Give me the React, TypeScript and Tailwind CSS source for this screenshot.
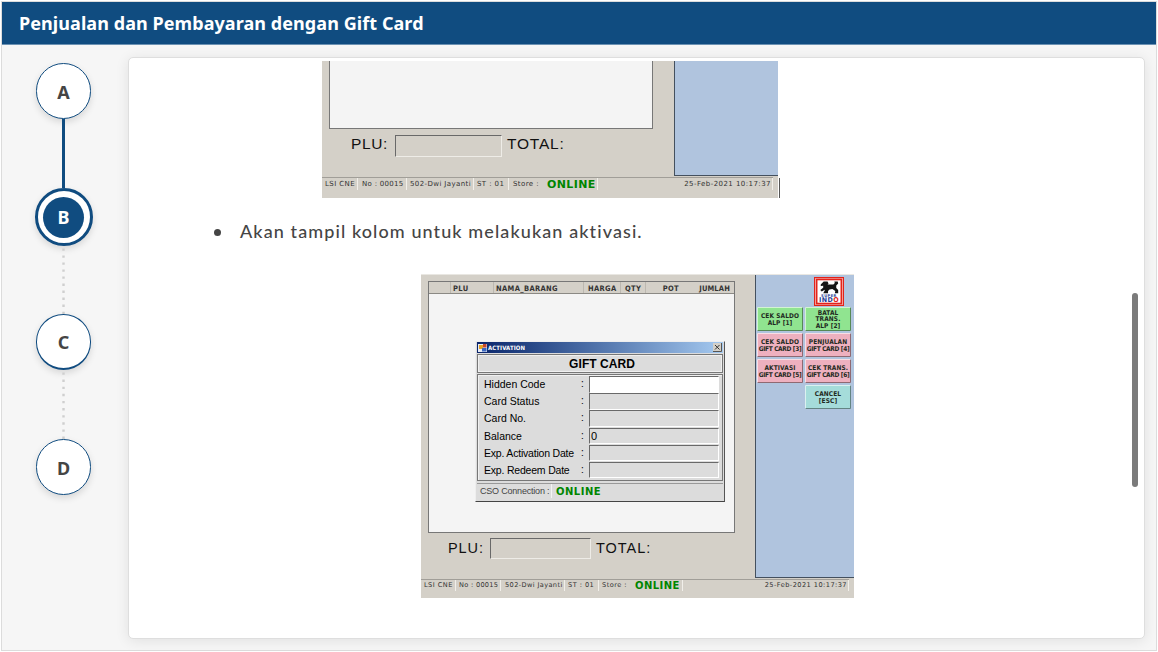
import type { ReactNode } from 'react';

const cell = 'h-full border-r border-[#f1efea] whitespace-nowrap overflow-hidden flex items-center';

function StepConnector({ active, className = '' }: { active?: boolean; className?: string }) {
  if (active) return <div className="h-[69px] w-[3px] shrink-0 bg-[#104c80]" />;
  return (
    <svg className={'w-[3px] shrink-0 ' + className} viewBox="0 0 3 70" preserveAspectRatio="none">
      <line x1="1.5" y1="2.5" x2="1.5" y2="70" stroke="#cfcfcf" strokeWidth="2.4" strokeDasharray="2.4 4.83" />
    </svg>
  );
}

function Step({ label, className = '' }: { label: string; className?: string }) {
  return (
    <div
      className={
        'flex h-14 w-[55px] shrink-0 items-center justify-center rounded-full border border-[#104c80] bg-white pt-px text-lg leading-none font-bold text-[#454545] shadow-[0_3px_7px_rgba(0,0,0,0.13)] ' +
        className
      }
    >
      {label}
    </div>
  );
}

function LionLogo() {
  return (
    <svg className="h-[29px] w-[30px]" viewBox="0 0 31 29" preserveAspectRatio="none">
      <rect width="31" height="29" fill="#e2231a" />
      <rect x="1.3" y="1.2" width="28.4" height="26.6" fill="#fff" />
      <rect x="2.7" y="2.4" width="25.6" height="24.2" fill="none" stroke="#e2231a" strokeWidth="1.8" />
      <path
        d="M7 7.5 L10 4.5 L14 4.5 L15 6.5 L14 7.5 L20 7.5 L21.5 6 L21 4.5 L24.5 4.5 L25 6.5 L23 8.5 L23 11 L25 13 L25 16.3 L21.5 16.3 L22 14 L19 12 L16 12.6 L14.5 14 L14.5 16.3 L9.5 16.3 L11 13.8 L11 12.8 L8 14.5 L6.5 13 L9.5 10.8 L9.5 8.8 L7 9 Z"
        fill="#151515"
      />
      <text x="15.5" y="19.8" textAnchor="middle" fontFamily="DejaVu Sans" fontWeight="bold" fontSize="3.8" fill="#273d95">SUPER</text>
      <text x="15.5" y="25.4" textAnchor="middle" fontFamily="DejaVu Sans" fontWeight="bold" fontSize="6.6" fill="#273d95">
        IND<tspan fill="#e2231a">O</tspan>
      </text>
    </svg>
  );
}

function KeyButton({ lines, tone }: { lines: string[]; tone: string }) {
  return (
    <div
      className={
        "flex h-6 w-[46px] flex-col items-center justify-center rounded-[1px] border border-t-white/60 border-l-white/60 border-r-black/40 border-b-black/40 pt-px font-['DejaVu_Sans_Condensed','DejaVu_Sans',sans-serif] text-[6.5px] leading-[6.6px] font-bold whitespace-nowrap text-[#1f2a22] " +
        tone
      }
    >
      {lines.map((line) => (
        <span key={line} className={line.startsWith('GIFT') ? 'tracking-[-0.3px]' : 'tracking-[0.1px]'}>{line}</span>
      ))}
    </div>
  );
}

function Field({ label, children, white }: { label: string; children?: ReactNode; white?: boolean }) {
  return (
    <div className="flex h-[17.2px] items-start">
      <span
        className={
          'w-[102px] pl-[5px] text-[10.5px] leading-4 whitespace-nowrap ' +
          (label.startsWith('Exp.') ? 'tracking-[-0.2px]' : 'tracking-normal')
        }
      >
        {label}
      </span>
      <span className="w-[8px] text-[10px] leading-4">:</span>
      <div
        className={
          'h-[16.5px] w-[130px] border-t border-l border-[#696969] border-r border-b border-r-white border-b-white pl-[1px] text-[11px] leading-[15px] ' +
          (white ? 'bg-white' : 'bg-[#dcdcdc]')
        }
      >
        {children}
      </div>
    </div>
  );
}

function ActivationDialog() {
  return (
    <div className="absolute top-[59px] left-[46px] flex h-[161px] w-[250px] flex-col border border-t-[#eeeeee] border-l-[#eeeeee] border-r-[#555] border-b-[#444] bg-[#dcdcdc] px-px font-['Liberation_Sans',sans-serif] text-black">
      <div className="flex h-[11px] items-center bg-linear-to-r from-[#0a246a] to-[#a6caf0] pr-px">
        <svg className="ml-px h-2.5 w-2.5" viewBox="0 0 10 10">
          <rect x="0" y="1" width="9" height="8" fill="#e8edf5" />
          <rect x="1" y="2" width="4" height="4" fill="#e7a427" />
          <rect x="5" y="1" width="3.5" height="3.5" fill="#c4452d" />
          <rect x="4" y="5" width="4.5" height="3.5" fill="#3c67bd" />
        </svg>
        <span className="font-['DejaVu_Sans_Condensed','DejaVu_Sans',sans-serif] text-[6px] leading-none font-bold tracking-[0.1px] text-white">ACTIVATION</span>
        <svg className="ml-auto h-[9px] w-[9px]" viewBox="0 0 9 9">
          <rect width="9" height="9" fill="#d4d0c8" />
          <path d="M0 8.5H8.5V0" stroke="#555" fill="none" />
          <path d="M2 2L6.5 6.5M6.5 2L2 6.5" stroke="#333" strokeWidth="1" />
        </svg>
      </div>
      <div className="mt-px flex h-[19px] items-center justify-center border border-[#777] text-[12px] leading-none font-bold tracking-[0.05px] outline-1 -outline-offset-2 outline-[#f0f0f0]">
        <span className="pl-[4px]">GIFT CARD</span>
      </div>
      <div className="mt-px h-[107px] border border-[#777] pt-px pl-px shadow-[inset_1px_1px_0_#f0f0f0]">
        <Field label="Hidden Code" white />
        <Field label="Card Status" />
        <Field label="Card No." />
        <Field label="Balance">0</Field>
        <Field label="Exp. Activation Date" />
        <Field label="Exp. Redeem Date" />
      </div>
      <div className="mt-[2px] flex h-[15px] border-t border-[#999]">
        <span className="w-[75px] border-r border-[#f4f4f4] pl-[3px] text-[9px] leading-[15px] tracking-[-0.2px] whitespace-nowrap text-[#444]">CSO Connection :</span>
        <span className="pl-[4px] font-['DejaVu_Sans',sans-serif] text-[10px] leading-[15px] font-bold tracking-[0.5px] text-[#008500]">ONLINE</span>
      </div>
    </div>
  );
}

function FirstScreen() {
  return (
    <div className="ml-[193px] flex w-[458px] items-end">
      <div className="h-[137px] w-[456px] bg-[#d4d0c8] font-['DejaVu_Sans',sans-serif] text-[7px] tracking-[0.4px] text-[#333]">
        <div className="flex h-[115px]">
          <div className="flex w-[352px] flex-col">
            <div className="ml-[7px] h-[68px] w-[324px] border-x border-b border-[#777] bg-[#f4f4f4]" />
            <div className="mt-[6px] flex h-[22px] items-center font-['Liberation_Sans',sans-serif] text-[15.5px] leading-none text-[#111]">
              <span className="w-[73px] pb-[4px] pl-[29px] tracking-[0.6px]">PLU:</span>
              <span className="h-[22px] w-[107px] border border-t-[#696969] border-l-[#696969] border-r-[#eeece7] border-b-[#eeece7]" />
              <span className="pb-[4px] pl-[5px] tracking-[0.8px]">TOTAL:</span>
            </div>
          </div>
          <div className="flex-1 border-b border-l border-[#44505e] bg-[#b0c4de]" />
        </div>
        <div className="mt-px flex h-[13px] w-[451px] border-t border-[#a19e98]">
          <span className={cell + ' w-[36px] pl-[3px]'}>LSI CNE</span>
          <span className={cell + ' w-[49px] pl-[4px] tracking-[0.3px]'}>No : 00015</span>
          <span className={cell + ' w-[67px] pl-[3px]'}>502-Dwi Jayanti</span>
          <span className={cell + ' w-[35px] pl-[3px]'}>ST : 01</span>
          <span className={cell + ' w-[34px] border-r-0 pl-[4px]'}>Store :</span>
          <span className={cell + ' w-[55px] pt-[2px] pl-[4px] text-[11px] font-bold text-[#008500]'}>ONLINE</span>
          <span className={cell + ' flex-1 justify-end pr-px tracking-[0.45px]'}>25-Feb-2021 10:17:37</span>
        </div>
      </div>
      <div className="ml-px h-5 w-px bg-[#555]" />
    </div>
  );
}

function SecondScreen() {
  return (
    <div className="ml-[292px] h-[324px] w-[433px] bg-[#d4d0c8] font-['DejaVu_Sans',sans-serif] text-[6.6px] tracking-[0.45px] text-[#333]">
      <div className="flex h-[304px] border-t border-[#e9e7e2]">
        <div className="flex w-[334px] flex-col">
          <div className="relative mt-[6px] ml-[7px] h-[252px] w-[307px] border border-[#777] bg-[#f4f4f4] tracking-normal">
            <div className="flex h-[12px] items-center border-b border-[#8b8984] bg-[#d4d0c8] font-['DejaVu_Sans_Condensed','DejaVu_Sans',sans-serif] text-[7.5px] leading-none font-bold tracking-[0.35px] text-[#333]">
              <span className="h-full w-[22px] border-r border-[#bcb8b0]" />
              <span className="flex h-full w-[43px] items-center border-r border-[#bcb8b0] pt-[2px] pl-[2px]">PLU</span>
              <span className="flex h-full w-[90px] items-center border-r border-[#bcb8b0] pt-[2px] pl-[2px]">NAMA_BARANG</span>
              <span className="flex h-full w-[37px] items-center border-r border-[#bcb8b0] pt-[2px] pl-[4px]">HARGA</span>
              <span className="flex h-full w-[25px] items-center border-r border-[#bcb8b0] pt-[2px] pl-[4px]">QTY</span>
              <span className="flex h-full w-[38px] items-center justify-end pt-[2px] pr-[5px]">POT</span>
              <span className="flex-1 pt-[2px] pr-[4px] text-right tracking-[0.15px]">JUMLAH</span>
            </div>
            <ActivationDialog />
          </div>
          <div className="mt-[5px] flex h-[21px] items-center font-['Liberation_Sans',sans-serif] text-[14.5px] leading-none text-[#111]">
            <span className="w-[69px] pb-px pl-[27px] tracking-[0.9px]">PLU:</span>
            <span className="h-[21px] w-[101px] border border-t-[#696969] border-l-[#696969] border-r-[#eeece7] border-b-[#eeece7]" />
            <span className="pb-px pl-[5px] tracking-[0.95px]">TOTAL:</span>
          </div>
        </div>
        <div className="flex h-[303px] flex-1 flex-col border-b border-l border-[#44505e] bg-[#b0c4de] pl-px">
          <div className="mt-[2px] ml-[57px]"><LionLogo /></div>
          <div className="mt-px grid grid-cols-[46px_46px] gap-[2px]">
            <KeyButton lines={['CEK SALDO', 'ALP [1]']} tone="bg-[#90e490]" />
            <KeyButton lines={['BATAL', 'TRANS.', 'ALP [2]']} tone="bg-[#90e490]" />
            <KeyButton lines={['CEK SALDO', 'GIFT CARD [3]']} tone="bg-[#eeb0bf]" />
            <KeyButton lines={['PENJUALAN', 'GIFT CARD [4]']} tone="bg-[#eeb0bf]" />
            <KeyButton lines={['AKTIVASI', 'GIFT CARD [5]']} tone="bg-[#eeb0bf]" />
            <KeyButton lines={['CEK TRANS.', 'GIFT CARD [6]']} tone="bg-[#eeb0bf]" />
            <span />
            <KeyButton lines={['CANCEL', '[ESC]']} tone="bg-[#a5dcda]" />
          </div>
        </div>
      </div>
      <div className="mt-px flex h-[12px] w-[428px] border-t border-[#a19e98]">
        <span className={cell + ' w-[35px] pl-[3px]'}>LSI CNE</span>
        <span className={cell + ' w-[45px] pl-[3px] tracking-[0.3px]'}>No : 00015</span>
        <span className={cell + ' w-[64px] pl-[4px] tracking-[0.38px]'}>502-Dwi Jayanti</span>
        <span className={cell + ' w-[34px] pl-[3px]'}>ST : 01</span>
        <span className={cell + ' w-[32px] border-r-0 pl-[3px]'}>Store :</span>
        <span className={cell + ' w-[52px] pl-[4px] text-[10px] font-bold text-[#008500]'}>ONLINE</span>
        <span className={cell + ' flex-1 justify-end pr-px'}>25-Feb-2021 10:17:37</span>
      </div>
    </div>
  );
}

export default function App() {
  return (
    <div className="h-[652px] w-[1158px] bg-white p-px font-['Noto_Sans',sans-serif]">
      <div className="flex h-[650px] w-[1156px] flex-col border border-[#dcdcdc] bg-[#f6f6f6]">
        <header className="flex h-[43px] shrink-0 items-center border-b border-[#6c92b3] bg-[#104c80] pb-px pl-[17px] text-[18px] leading-none font-bold tracking-[0.07px] text-white">
          Penjualan dan Pembayaran dengan Gift Card
        </header>
        <div className="flex min-h-0 flex-1">
          <nav className="flex w-[126px] shrink-0 flex-col items-center pt-[18px] pr-[3px]">
            <Step label="A" />
            <StepConnector active />
            <div className="flex h-[58px] w-[58px] shrink-0 items-center justify-center rounded-full border-[3px] border-[#104c80] bg-white shadow-[0_3px_7px_rgba(0,0,0,0.13)]">
              <div className="flex h-[41px] w-[41px] items-center justify-center rounded-full bg-[#104c80] text-lg leading-none font-bold text-white">B</div>
            </div>
            <StepConnector className="h-[68px]" />
            <Step label="C" className="border-b-2" />
            <StepConnector className="h-[69px]" />
            <Step label="D" />
          </nav>
          <main className="mt-3 flex h-[582px] w-[1017px] rounded-[5px] border border-[#dedede] bg-white pt-[3px] shadow-[0_2px_14px_rgba(0,0,0,0.09)]">
            <div className="w-[1003px] overflow-hidden">
              <FirstScreen />
              <div className="mt-[20px] flex h-7 items-center pl-[85px]">
                <span className="h-[7px] w-[7px] rounded-full bg-[#454545]" />
                <p className="ml-[19px] pb-[2px] font-[Lato,sans-serif] text-[18px] leading-none font-medium tracking-[1.09px] whitespace-nowrap text-[#454545]">
                  Akan tampil kolom untuk melakukan aktivasi.
                </p>
              </div>
              <div className="mt-[28px]">
                <SecondScreen />
              </div>
            </div>
            <div className="mt-[232px] h-[194px] w-[6px] rounded-full bg-[#7b7b7b]" />
          </main>
        </div>
      </div>
    </div>
  );
}
